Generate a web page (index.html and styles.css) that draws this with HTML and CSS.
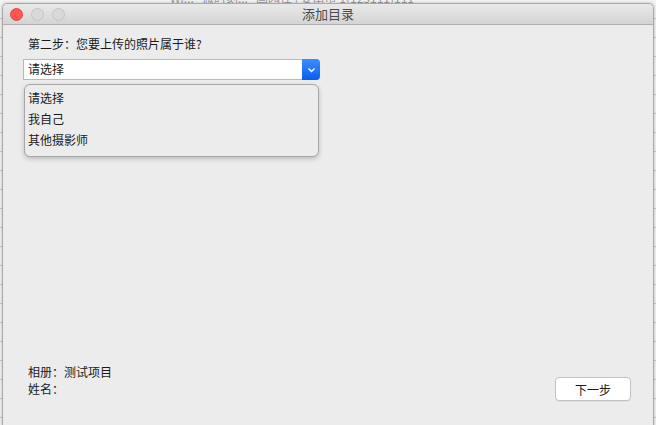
FILE: index.html
```html
<!DOCTYPE html>
<html lang="zh">
<head>
    <meta charset="UTF-8">
    <meta name="viewport" content="width=device-width, initial-scale=1.0">
    <title>添加目录</title>
    <link rel="stylesheet" href="styles.css">
</head>
<body>
    <div class="backdrop-title">Wi...   微时刻...   画园仕 | 委南市 1(123111)111</div>
    <div class="window">
        <div class="titlebar">
            <div class="lights">
                <span class="light red"></span>
                <span class="light"></span>
                <span class="light"></span>
            </div>
            <div class="title">添加目录</div>
        </div>
        <div class="content">
            <p class="step">第二步：您要上传的照片属于谁?</p>
            <div class="select">
                <span class="select-value">请选择</span>
                <span class="select-btn">
                    <svg width="9" height="6" viewBox="0 0 9 6"><path d="M1.5 1.5 L4.5 4.5 L7.5 1.5" fill="none" stroke="#fff" stroke-width="1.4"/></svg>
                </span>
            </div>
            <ul class="menu">
                <li>请选择</li>
                <li>我自己</li>
                <li>其他摄影师</li>
            </ul>
            <div class="footer">
                <div class="info">
                    <div>相册：测试项目</div>
                    <div>姓名：</div>
                </div>
                <button class="next">下一步</button>
            </div>
        </div>
    </div>
</body>
</html>
```

FILE: styles.css
```css
html, body {
    margin: 0;
    padding: 0;
    height: 100%;
    overflow: hidden;
}
body {
    font-family: "Noto Sans CJK SC", "Liberation Sans", sans-serif;
    font-size: 12px;
    color: #1a1a1a;
    background: repeating-linear-gradient(to bottom, #f2f2f2 0, #f2f2f2 18px, #c8c8c8 18px, #c8c8c8 19px);
    position: relative;
}
.backdrop-title {
    position: absolute;
    top: -8px;
    left: 170px;
    font-size: 12px;
    line-height: 12px;
    color: #9a9a9a;
    white-space: pre;
}
.window {
    position: relative;
    margin: 3px 2px 0 2px;
    height: 430px;
    background: #ececec;
    border: 1px solid #a9a9a9;
    border-radius: 5px 5px 0 0;
    box-shadow: 0 0 3px rgba(0, 0, 0, 0.25);
    display: flex;
    flex-direction: column;
}
.titlebar {
    height: 20px;
    display: flex;
    align-items: center;
    background: linear-gradient(to bottom, #e9e9e9, #d4d4d4);
    border-bottom: 1px solid #b1b1b1;
    border-radius: 5px 5px 0 0;
    position: relative;
}
.lights {
    display: flex;
    gap: 8px;
    padding-left: 7px;
}
.light {
    width: 11px;
    height: 11px;
    border-radius: 50%;
    background: #d9d9d9;
    border: 1px solid #c4c4c4;
}
.light.red {
    background: #fc5753;
    border-color: #df4744;
}
.title {
    position: absolute;
    left: 0;
    right: 0;
    text-align: center;
    font-size: 13px;
    color: #4a4a4a;
    line-height: 20px;
}
.content {
    flex: 1;
    padding: 10px 0 0 20px;
    display: flex;
    flex-direction: column;
}
.step {
    margin: 0 0 7px 5px;
    line-height: 17px;
}
.select {
    width: 296px;
    height: 19px;
    display: flex;
    background: #fff;
    border: 1px solid #b9b9b9;
    border-right: none;
    border-radius: 1px 4px 4px 1px;
}
.select-value {
    flex: 1;
    padding-left: 4px;
    line-height: 18px;
}
.select-btn {
    width: 18px;
    height: 21px;
    margin-top: -1px;
    background: linear-gradient(to bottom, #3c8dfb, #0b5ef0);
    border-radius: 0 4px 4px 0;
    display: flex;
    align-items: center;
    justify-content: center;
}
.menu {
    list-style: none;
    margin: 4px 0 0 1px;
    padding: 2px 0 6px 0;
    width: 293px;
    background: #ececec;
    border: 1px solid #a6a6a6;
    border-radius: 6px;
    box-shadow: 0 2px 5px rgba(0, 0, 0, 0.2);
}
.menu li {
    line-height: 21px;
    padding-left: 3px;
}
.footer {
    margin-top: auto;
    margin-bottom: 37px;
    display: flex;
    align-items: flex-end;
    padding-right: 22px;
}
.info {
    flex: 1;
    padding-left: 5px;
    line-height: 17px;
}
.next {
    width: 76px;
    height: 24px;
    margin-bottom: -4px;
    font-family: inherit;
    font-size: 12px;
    color: #1a1a1a;
    background: #fff;
    border: 1px solid #c2c2c2;
    border-radius: 4px;
    box-shadow: 0 1px 0 rgba(0, 0, 0, 0.05);
}
```
